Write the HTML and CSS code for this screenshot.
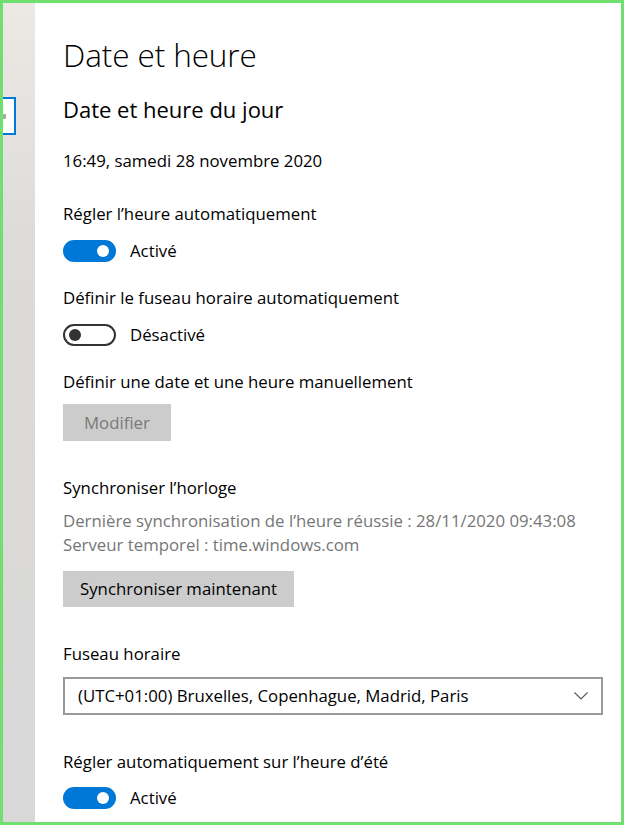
FILE: index.html
```html
<!DOCTYPE html>
<html lang="fr">
<head>
  <meta charset="UTF-8">
  <meta name="viewport" content="width=device-width, initial-scale=1.0">
  <title>Date et heure</title>
  <link rel="stylesheet" href="styles.css">
</head>
<body>
  <div class="fenetre">
    <aside class="barre-laterale">
      <div class="recherche-bord"><span class="recherche-icone"></span></div>
    </aside>
    <main class="contenu">
      <h1 class="titre-page">Date et heure</h1>
      <h2 class="titre-section">Date et heure du jour</h2>
      <p class="maintenant">16:49, samedi 28 novembre 2020</p>

      <div class="reglage">
        <p class="libelle">Régler l’heure automatiquement</p>
        <div class="interrupteur-ligne">
          <span class="interrupteur actif"><span class="bouton-rond"></span></span>
          <span class="etat">Activé</span>
        </div>
      </div>

      <div class="reglage">
        <p class="libelle">Définir le fuseau horaire automatiquement</p>
        <div class="interrupteur-ligne">
          <span class="interrupteur"><span class="bouton-rond"></span></span>
          <span class="etat">Désactivé</span>
        </div>
      </div>

      <div class="reglage">
        <p class="libelle">Définir une date et une heure manuellement</p>
        <button class="bouton desactive" disabled>Modifier</button>
      </div>

      <div class="reglage bloc">
        <p class="libelle">Synchroniser l’horloge</p>
        <p class="details">Dernière synchronisation de l’heure réussie : 28/11/2020 09:43:08<br>Serveur temporel : time.windows.com</p>
        <button class="bouton sync">Synchroniser maintenant</button>
      </div>

      <div class="reglage bloc">
        <p class="libelle">Fuseau horaire</p>
        <div class="liste">
          <span>(UTC+01:00) Bruxelles, Copenhague, Madrid, Paris</span>
          <svg class="chevron" viewBox="0 0 14 8"><path d="M0.5 0.5 L7 7 L13.5 0.5" fill="none" stroke="#555" stroke-width="1.1"/></svg>
        </div>
      </div>

      <div class="reglage bloc">
        <p class="libelle">Régler automatiquement sur l’heure d’été</p>
        <div class="interrupteur-ligne ete">
          <span class="interrupteur actif"><span class="bouton-rond"></span></span>
          <span class="etat">Activé</span>
        </div>
      </div>
    </main>
  </div>
</body>
</html>
```

FILE: styles.css
```css
:root {
  --vert-cadre: #6fdf6f;
  --bleu: #0078d7;
  --texte: #000;
  --texte-gris: #767676;
  --gris-bouton: #cccccc;
  --gris-bordure: #999;
}
* { box-sizing: border-box; margin: 0; padding: 0; }
body {
  font-family: "Open Sans", "Liberation Sans", sans-serif;
  font-size: 16.8px;
  line-height: 24px;
  color: var(--texte);
  background: #fff;
}
.fenetre {
  width: 624px;
  height: 825px;
  border: 3px solid var(--vert-cadre);
  display: flex;
  overflow: hidden;
}
.barre-laterale {
  width: 32px;
  flex-shrink: 0;
  background: linear-gradient(#ece8e4, #dddbd9 30%, #d8d8d8);
  padding-top: 94px;
}
.recherche-bord {
  width: 13px;
  height: 38px;
  background: #fff;
  border: 2px solid var(--bleu);
  border-left: none;
  position: relative;
}
.recherche-icone {
  position: absolute;
  left: 0;
  top: 15px;
  width: 3px;
  height: 5px;
  background: #aaa;
}
.contenu {
  flex: 1;
  background: #fff;
  padding: 32px 18px 0 28px;
}
.titre-page {
  font-size: 31.5px;
  line-height: 40px;
  font-weight: 300;
  letter-spacing: -0.1px;
}
.titre-section {
  font-size: 22px;
  line-height: 30px;
  font-weight: 400;
  margin-top: 19px;
}
.maintenant { margin-top: 25px; }
.reglage { margin-top: 29px; }
.reglage + .reglage { margin-top: 24px; }
.reglage.bloc { margin-top: 35px; }
.interrupteur-ligne {
  display: flex;
  align-items: center;
  gap: 14px;
  margin-top: 14px;
  height: 22px;
}
.interrupteur-ligne.ete { margin-top: 13px; }
.interrupteur {
  width: 53px;
  height: 22px;
  border-radius: 11px;
  border: 2px solid #333;
  display: flex;
  align-items: center;
  padding: 0 4px;
}
.interrupteur.actif {
  background: var(--bleu);
  border-color: var(--bleu);
  justify-content: flex-end;
  padding: 0 5px;
}
.bouton-rond {
  width: 12px;
  height: 12px;
  border-radius: 50%;
  background: #333;
}
.interrupteur.actif .bouton-rond { background: #fff; }
.bouton {
  display: block;
  font: inherit;
  border: none;
  background: var(--gris-bouton);
  color: var(--texte);
  height: 37px;
  padding: 0 21px;
  margin-top: 10px;
}
.bouton.desactive { color: #7a7a7a; }
.details {
  color: var(--texte-gris);
  margin-top: 9px;
}
.bouton.sync {
  margin-top: 14px;
  height: 36px;
  padding: 0 17px;
}
.liste {
  margin-top: 11px;
  height: 38px;
  border: 2px solid var(--gris-bordure);
  display: flex;
  align-items: center;
  justify-content: space-between;
  padding: 0 13px 0 13px;
}
.chevron {
  width: 14px;
  height: 8px;
}
```
